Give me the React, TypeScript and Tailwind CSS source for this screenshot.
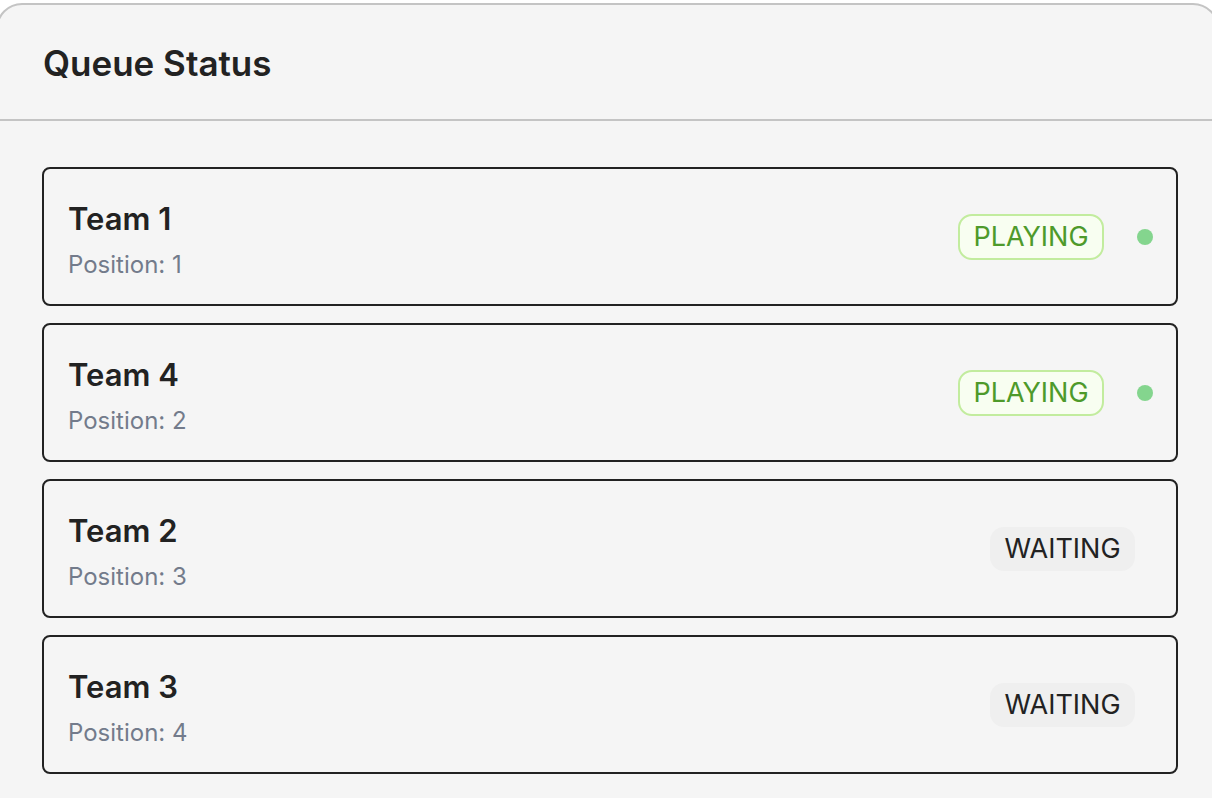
const teams = [
  { name: "Team 1", position: 1, status: "PLAYING" },
  { name: "Team 4", position: 2, status: "PLAYING" },
  { name: "Team 2", position: 3, status: "WAITING" },
  { name: "Team 3", position: 4, status: "WAITING" },
];

function StatusBadge({ status }: { status: string }) {
  if (status === "PLAYING") {
    return (
      <div className="flex items-center">
        <span className="flex h-[46px] w-[146px] items-center justify-center rounded-[14px] border-2 border-[#c2ec9e] bg-[#f8fef1] text-[27px] leading-none text-[#4e9a2b]">
          PLAYING
        </span>
        <span className="ml-[33px] h-4 w-4 rounded-full bg-[#84d58e]" />
      </div>
    );
  }
  return (
    <span className="mr-[18px] flex h-[44px] w-[145px] items-center justify-center rounded-[14px] bg-[#efefef] text-[27px] leading-none text-[#222]">
      WAITING
    </span>
  );
}

export default function App() {
  return (
    <div className="min-h-screen overflow-hidden bg-white pt-[3px] font-['Inter',sans-serif]">
      <div className="ml-[-4px] w-[1223px] rounded-[26px] border-2 border-[#c4c4c4] bg-[#f5f5f5]">
        <div className="flex h-[116px] items-center border-b-2 border-[#c4c4c4] pl-[45px] pt-[2px]">
          <h2 className="text-[35px] font-semibold text-[#222]">Queue Status</h2>
        </div>
        <div className="flex flex-col gap-[17px] pl-[44px] pt-[46px] pb-[60px]">
          {teams.map((team) => (
            <div
              key={team.name}
              className="flex h-[139px] w-[1136px] items-center justify-between rounded-[8px] border-2 border-[#222] pl-[24px] pr-[23px]"
            >
              <div className="flex flex-col pt-[6px]">
                <span className="text-[31px] font-semibold leading-[36px] text-[#222]">{team.name}</span>
                <span className="mt-[14px] text-[24px] leading-[28px] text-[#737b8b]">
                  Position: {team.position}
                </span>
              </div>
              <StatusBadge status={team.status} />
            </div>
          ))}
        </div>
      </div>
    </div>
  );
}
